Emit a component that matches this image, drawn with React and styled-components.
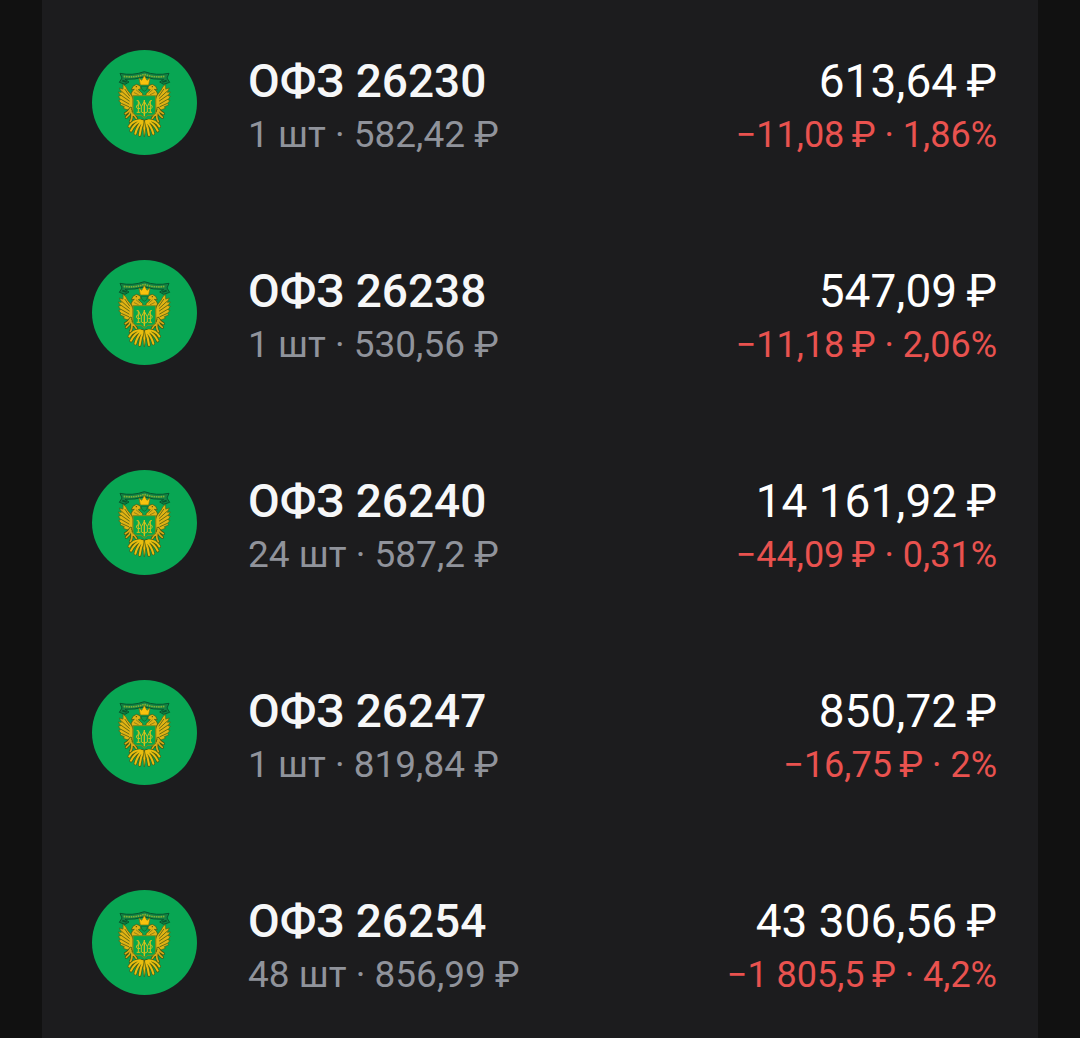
import React from "react";
import styled, { createGlobalStyle } from "styled-components";

const GlobalStyle = createGlobalStyle`
  * {
    box-sizing: border-box;
  }

  body {
    margin: 0;
    background: #111111;
    font-family: Roboto, "Noto Sans", sans-serif;
  }
`;

const Page = styled.main`
  min-height: 100vh;
  display: flex;
  padding: 0 42px;
`;

const List = styled.ul`
  flex: 1;
  min-width: 0;
  margin: 0;
  padding: 0;
  list-style: none;
  background: #1c1c1e;
`;

const Row = styled.li`
  display: flex;
  align-items: flex-start;
  gap: 51px;
  padding: 50px 41px 48px 50px;

  &:last-child {
    padding-bottom: 36px;
  }
`;

const Logo = styled.svg`
  flex: none;
  width: 105px;
  height: 105px;
`;

const Column = styled.div`
  display: flex;
  flex-direction: column;
  flex: ${(props) => (props.$end ? "none" : "1")};
  align-items: ${(props) => (props.$end ? "flex-end" : "flex-start")};
  padding-top: 4px;
  white-space: nowrap;
`;

const Name = styled.h2`
  margin: 0;
  font-size: 46px;
  font-weight: 500;
  line-height: 54px;
  color: #f6f7f8;
`;

const Price = styled.span`
  font-size: 46px;
  line-height: 54px;
  color: #ffffff;
`;

const Quantity = styled.span`
  font-size: 37px;
  line-height: 54px;
  color: #90939b;
`;

const Change = styled.span`
  font-size: 36px;
  line-height: 54px;
  color: #e9524f;
`;

const bonds = [
  {
    name: "ОФЗ 26230",
    quantity: "1 шт · 582,42 ₽",
    price: "613,64\u2009₽",
    change: "−11,08\u2009₽ · 1,86%",
  },
  {
    name: "ОФЗ 26238",
    quantity: "1 шт · 530,56 ₽",
    price: "547,09\u2009₽",
    change: "−11,18\u2009₽ · 2,06%",
  },
  {
    name: "ОФЗ 26240",
    quantity: "24 шт · 587,2 ₽",
    price: "14 161,92\u2009₽",
    change: "−44,09\u2009₽ · 0,31%",
  },
  {
    name: "ОФЗ 26247",
    quantity: "1 шт · 819,84 ₽",
    price: "850,72\u2009₽",
    change: "−16,75\u2009₽ · 2%",
  },
  {
    name: "ОФЗ 26254",
    quantity: "48 шт · 856,99 ₽",
    price: "43 306,56\u2009₽",
    change: "−1 805,5\u2009₽ · 4,2%",
  },
];

export default function App() {
  return (
    <>
      <GlobalStyle />
      <Page>
        <List>
          {bonds.map((bond) => (
            <Row key={bond.name}>
              <Emblem />
              <Column>
                <Name>{bond.name}</Name>
                <Quantity>{bond.quantity}</Quantity>
              </Column>
              <Column $end>
                <Price>{bond.price}</Price>
                <Change>{bond.change}</Change>
              </Column>
            </Row>
          ))}
        </List>
      </Page>
    </>
  );
}

const feathers =
  "M123 136 L137 156 M112 141 L136 163 M110 153 L136 171 M111 166 L135 180 M114 179 L134 188";
const legs =
  "M140 193 Q136 202 124 209 M141 199 Q138 212 127 220 M143 205 Q146 222 139 233 M144 209 Q152 214 157 223";
const tail =
  "M168 229 Q148 229 136 247 M172 230 Q152 238 141 260 M175 231 Q160 246 154 269 M178 232 Q169 252 167 273";

/* Half of the eagle, the other half is mirrored around x = 181 */
function EagleHalf() {
  return (
    <g strokeLinejoin="round" strokeLinecap="round" fill="none">
      {/* wing */}
      <path
        d="M118 121 Q127 128 131 139 L143 154 L147 166 V200 L138 197 L129 197 L118 193 L121 188 L108 183 L112 178 L104 170 L110 167 L103 157 L110 155 L103 144 L112 145 L106 132 L116 135 Z"
        fill="#e0b315"
        stroke="#4a6013"
        strokeWidth="2"
      />
      <path d={feathers} stroke="#6d6d10" strokeWidth="3" />
      <path d={legs} stroke="#3f5612" strokeWidth="9" />
      <path d={legs} stroke="#d5aa16" strokeWidth="5" />
      <path d={tail} stroke="#4b5c12" strokeWidth="10" />
      <path d={tail} stroke="#e8bd10" strokeWidth="6" />
      {/* neck and head */}
      <path
        d="M146 158 L141 150 L145 141 L151 136 L142 137 L147 127 L157 121 L168 125 L171 134 L163 137 L176 149 L176 157 Z"
        fill="#deb216"
        stroke="#3f5612"
        strokeWidth="2"
      />
      <path d="M151 146 L163 152 M157 138 L168 147" stroke="#6d6d10" strokeWidth="2" />
      <circle cx="157" cy="128" r="2" fill="#3f4a12" />
    </g>
  );
}

function Emblem() {
  return (
    <Logo viewBox="24 18 315 315" aria-hidden="true">
      <circle cx="181.5" cy="175.5" r="157.5" fill="#08a653" />
      {/* ribbon */}
      <path
        d="M108 88 Q145 96 181 83 Q217 96 255 88 L249 102 L257 115 L239 121 L227 114 L239 106 Q208 107 181 99 Q154 107 123 106 L135 114 L123 121 L106 115 L114 102 Z"
        fill="#128444"
        stroke="#07562d"
        strokeWidth="3"
      />
      <path
        d="M119 97 Q151 102 181 91 Q211 102 243 97"
        fill="none"
        stroke="#7fae35"
        strokeWidth="5"
        strokeDasharray="5 2"
      />
      <path d="M115 110 L128 114 M248 110 L235 114" stroke="#07562d" strokeWidth="5" />
      <EagleHalf />
      <g transform="translate(362 0) scale(-1 1)">
        <EagleHalf />
      </g>
      <path
        d="M181 228 Q173 252 181 279 Q189 252 181 228 Z"
        fill="#f0bc0b"
        stroke="#4b5c12"
        strokeWidth="2"
      />
      {/* crown */}
      <path
        d="M165 102 L173 109 L177 102 L181 94 L185 102 L189 109 L198 102 L194 123 L169 123 Z"
        fill="#fac30d"
        stroke="#76700e"
        strokeWidth="2"
      />
      <path
        d="M171 127 L191 127 L188 137 L181 142 L174 137 Z"
        fill="#159b4b"
        stroke="#17602c"
        strokeWidth="2"
      />
      {/* shield with the monogram */}
      <path
        d="M147 155 H215 V202 Q215 214 202 214 H191 L181 222 L171 214 H160 Q147 214 147 202 Z"
        fill="#07a84c"
        stroke="#8b8a15"
        strokeWidth="3"
      />
      <g fill="none" stroke="#d2c01d" strokeWidth="3">
        <path d="M158 170 H163 V205 M204 170 H199 V205 M158 205 H169 M193 205 H204" />
        <path d="M163 170 L172 188 L181 172 L190 188 L199 170" />
        <path d="M166 182 Q156 182 157 190 Q161 197 169 193 M196 182 Q206 182 205 190 Q201 197 193 193" />
        <path d="M172 188 V204 Q181 212 190 204 V188" />
        <path d="M181 168 V217" strokeWidth="4" />
      </g>
    </Logo>
  );
}
